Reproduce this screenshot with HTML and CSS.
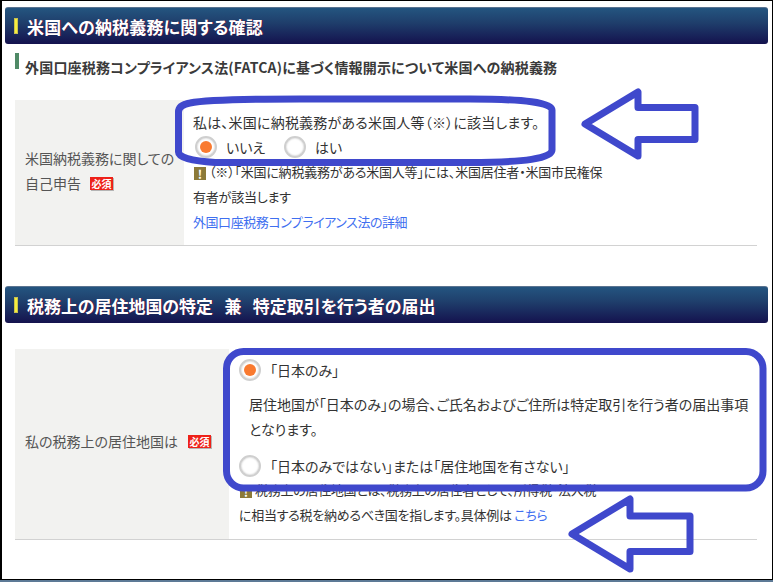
FILE: index.html
```html
<!DOCTYPE html>
<html lang="ja">
<head>
<meta charset="utf-8">
<title>納税義務の確認</title>
<link rel="stylesheet" href="styles.css">
</head>
<body>
<div class="frame">
  <section class="first">
    <h2 class="bar"><i class="mark"></i>米国への納税義務に関する確認</h2>
    <h3 class="sub"><i class="submark"></i>外国口座税務コンプライアンス法(FATCA)に基づく情報開示について米国への納税義務</h3>
    <div class="row row-a">
      <div class="label label-a"><p>米国納税義務に関しての<br>自己申告<span class="req">必須</span></p></div>
      <div class="body body-a">
        <p class="line lead">私は、米国に納税義務がある米国人等（※）に該当します。</p>
        <div class="radios">
          <span class="radio on"></span><span class="opt">いいえ</span>
          <span class="radio"></span><span class="opt">はい</span>
        </div>
        <p class="line note"><span class="warn">!</span>（※）「米国に納税義務がある米国人等」には、米国居住者・米国市民権保<br>有者が該当します</p>
        <p class="line link"><a href="#">外国口座税務コンプライアンス法の詳細</a></p>
      </div>
    </div>
  </section>
  <section class="second">
    <h2 class="bar"><i class="mark"></i>税務上の居住地国の特定&nbsp;&nbsp;&nbsp;兼&nbsp;&nbsp;&nbsp;特定取引を行う者の届出</h2>
    <div class="row row-b">
      <div class="label label-b"><p>私の税務上の居住地国は<span class="req req-b">必須</span></p></div>
      <div class="body body-b">
        <div class="choice"><span class="radio on"></span><span class="opt">「日本のみ」</span></div>
        <p class="line para">居住地国が「日本のみ」の場合、ご氏名およびご住所は特定取引を行う者の届出事項<br>となります。</p>
        <div class="choice choice-2"><span class="radio"></span><span class="opt">「日本のみではない」または「居住地国を有さない」</span></div>
        <p class="line note note-b"><span class="warn">!</span>税務上の居住地国とは、税務上の居住者として、所得税･法人税<br>に相当する税を納めるべき国を指します。具体例は <a href="#">こちら</a></p>
      </div>
    </div>
  </section>
  <svg class="marks" width="773" height="582" viewBox="0 0 773 582" fill="none" stroke="#3f48cc" stroke-width="7" stroke-linejoin="round">
    <path d="M178.500 112 Q178.500 105 190 103 Q210 99 300 99 L470 99 Q552 99 552 110 L552 150 Q552 162.500 470 162.500 L300 162.500 L215 162.500 Q178.500 160 178.500 152 Z"/>
    <rect x="226.500" y="351.500" width="536.500" height="136.500" rx="17"/>
    <path d="M585 124 L638 92 L638 107.500 L695 107.500 L695 139.500 L638 139.500 L638 156 Z"/>
    <path d="M572 534 L630 499 L630 516 L690 516 L690 551.500 L630 551.500 L630 569 Z"/>
  </svg>
</div>
</body>
</html>
```
FILE: styles.css
```css
* { box-sizing: border-box; }
html, body { margin: 0; padding: 0; }
body {
  width: 773px;
  height: 582px;
  overflow: hidden;
  background: #5d7a96;
  font-family: "Noto Sans CJK JP", "Liberation Sans", sans-serif;
  font-size: 14px;
  font-feature-settings: "palt";
  color: #333;
}
p, h2, h3 { margin: 0; }
.frame {
  position: relative;
  width: 773px;
  height: 580px;
  background: #fff;
  border: solid #000;
  border-width: 1px 1px 1px 2px;
  padding: 6px 4px 0 3px;
  overflow: hidden;
}
.bar {
  display: flex;
  align-items: center;
  height: 37px;
  padding-left: 9px;
  border-radius: 3px;
  border-top: 1px solid #5a7390;
  background: linear-gradient(#245580 0%, #1f3f6c 40%, #14124e 100%);
  color: #fff;
  font-size: 17px;
  font-weight: 700;
  letter-spacing: 0.15px;
  text-shadow: 1px 0 0 #4a1040;
}
.mark {
  width: 4px;
  height: 16px;
  margin-right: 9px;
  background: #f6ee3c;
  border: 1px solid #c8c050;
}
.sub {
  position: relative;
  margin: 13px 0 0 10px;
  padding-left: 10px;
  font-size: 14px;
  line-height: 20px;
  font-weight: 700;
  color: #3a3a3a;
  letter-spacing: 0.19px;
  display: flex;
}
.submark {
  width: 4px;
  height: 16px;
  margin: -4px 6px 0 -10px;
  background: #4f8a66;
}
.row {
  display: flex;
  margin-left: 10px;
  width: 742px;
  border-bottom: 1px solid #d2d2d2;
}
.row-a { margin-top: 23px; height: 146px; }
.row-b { margin-top: 26px; height: 191px; }
.label {
  display: flex;
  align-items: center;
  background: #f2f2f0;
  padding-left: 10px;
  color: #555;
  line-height: 25px;
}
.label-a { width: 169px; padding-bottom: 3px; }
.label-b { width: 214px; padding-bottom: 5px; }
.req {
  display: inline-block;
  width: 23px;
  height: 13px;
  margin-left: 9px;
  background: #ee2118;
  box-shadow: 1px 1px 0 #b5b5b5;
  color: #fff;
  font-size: 10px;
  line-height: 13px;
  font-weight: 700;
  text-align: center;
  letter-spacing: 0;
  vertical-align: 1px;
}
.req-b { margin-left: 10px; }
.line { line-height: 25px; }
.lead { letter-spacing: 0.2px; }
.body-a { padding: 10px 0 0 9px; }
.body-b { padding: 8px 0 0 10px; }
.radios { display: flex; align-items: center; height: 24px; margin-left: 2px; }
.radio {
  position: relative;
  flex: none;
  width: 22px;
  height: 22px;
  border-radius: 50%;
  border: 2px solid #cfcfcf;
  background: #fff;
  box-shadow: inset 0 0 2px #bbb;
}
.radio.on::after {
  content: "";
  position: absolute;
  left: 3px;
  top: 3px;
  width: 12px;
  height: 12px;
  border-radius: 50%;
  background: #f97a30;
}
.opt { margin-left: 9px; }
.radios .opt { margin-right: 19px; }
.note { font-size: 13px; letter-spacing: -0.2px; }
.link { font-size: 13px; letter-spacing: -0.45px; }
.warn {
  display: inline-block;
  width: 12px;
  height: 13px;
  margin: 0 3px 0 1px;
  background: #8c7a38;
  color: #fff;
  font-size: 12px;
  line-height: 13px;
  font-weight: 700;
  text-align: center;
  vertical-align: -2px;
  letter-spacing: 0;
}
a { color: #3f6ff0; text-decoration: none; }
.choice { display: flex; align-items: center; height: 25px; }
.para { margin: 10px 0 0 10px; }
.choice-2 { margin-top: 11px; }
.note-b { margin-top: -1px; letter-spacing: -0.28px; }
.second { margin-top: 40px; }
.second .bar { letter-spacing: -0.05px; }
.marks { position: absolute; left: -2px; top: -1px; pointer-events: none; }
```
